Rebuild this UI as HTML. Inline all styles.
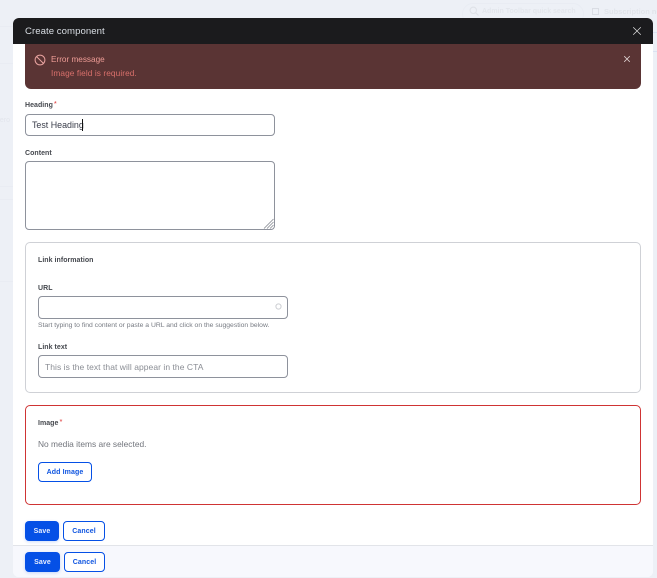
<!DOCTYPE html>
<html><head><meta charset="utf-8">
<style>
*{box-sizing:border-box}
html,body{margin:0;padding:0}
body{width:657px;height:578px;position:relative;overflow:hidden;background:#edf0f6;font-family:"Liberation Sans",Arial,sans-serif}
.a{position:absolute;white-space:nowrap}
.lbl{font-size:7px;line-height:10px;font-weight:700;color:#45484e;letter-spacing:.04px}
.req{color:#d33;font-size:7.5px;position:relative;top:-1px;margin-left:1px;font-weight:400}
.inp{position:absolute;background:#fff;border:1px solid #8e929c;border-radius:4px}
.btn{position:absolute;border-radius:4px;font-size:7px;font-weight:700;text-align:center;letter-spacing:.1px}
.pri{background:#0550e6;color:#e8eeff;box-shadow:0 1px 3px rgba(5,80,230,.2)}
.sec{background:#fff;color:#0f55e0;border:1px solid #0550e6}
</style></head>
<body>
<!-- background -->
<div class="a" style="left:0;top:26px;width:13px;height:1px;background:#e9ecf3"></div>
<div class="a" style="left:0;top:63px;width:13px;height:1px;background:#e9ecf3"></div>
<div class="a" style="left:0;top:186px;width:13px;height:1px;background:#e9ecf3"></div>
<div class="a" style="left:0;top:199px;width:13px;height:1px;background:#e9ecf3"></div>
<div class="a" style="left:0;top:281px;width:13px;height:1px;background:#e9ecf3"></div>
<div class="a" style="left:0;top:116px;font-size:7px;line-height:10px;color:#e2e5ec;width:10px;overflow:hidden;direction:rtl">ero</div>
<div class="a" style="left:653px;top:32px;width:4px;height:1px;background:#dbe2f2"></div>
<div class="a" style="left:653px;top:51px;width:4px;height:1px;background:#dbe2f2"></div>
<div class="a" style="left:462px;top:3px;width:122px;height:22px;border:1px solid #e9ecf3;border-radius:11px"></div>
<svg class="a" style="left:469px;top:6px" width="10" height="10" viewBox="0 0 10 10" fill="none" stroke="#dfe2e8" stroke-width="1.1"><circle cx="4.3" cy="4.3" r="3.2"/><path d="M6.8 6.8L9.5 9.5"/></svg>
<div class="a" style="left:482px;top:6px;font-size:7px;line-height:11px;font-weight:700;color:#e3e6ec">Admin Toolbar quick search</div>
<div class="a" style="left:592px;top:8px;width:7px;height:7px;border:1px solid #dadde4"></div>
<div class="a" style="left:604px;top:6px;font-size:7.5px;line-height:11px;font-weight:700;color:#e1e4ea">Subscription not a</div>

<!-- dialog -->
<div class="a" style="left:13px;top:18px;width:640px;height:559px;background:#fff;border-radius:6px;overflow:hidden">
  <div class="a" style="left:0;top:0;width:640px;height:26px;background:#1b1b1d"></div>
  <div class="a" style="left:0;top:527px;width:640px;height:32px;background:#f7f8fd;border-top:1px solid #e2e4e9"></div>
</div>
<div class="a" style="left:25px;top:26px;font-size:9.6px;line-height:12px;color:#d8dde3;letter-spacing:.05px">Create component</div>
<svg class="a" style="left:632px;top:25px" width="10" height="12" viewBox="0 0 10 12" fill="none" stroke="#e0e0e0" stroke-width=".7"><path d="M1.2 2.2L8.8 9.8M8.8 2.2L1.2 9.8"/></svg>

<!-- error -->
<div class="a" style="left:25px;top:44px;width:616px;height:45px;background:#5a3434;border-radius:0 0 6px 6px"></div>
<svg class="a" style="left:34px;top:54px" width="12" height="12" viewBox="0 0 12 12" fill="none" stroke="#e9a3a0" stroke-width="1"><circle cx="6" cy="6" r="4.9"/><path d="M2.6 2.6L9.4 9.4"/></svg>
<div class="a" style="left:51px;top:54px;font-size:8.2px;line-height:11px;color:#ee9c96">Error message</div>
<div class="a" style="left:51px;top:68px;font-size:8.3px;line-height:11px;color:#d9706b;letter-spacing:.08px">Image field is required.</div>
<svg class="a" style="left:623px;top:55px" width="8" height="8" viewBox="0 0 8 8" fill="none" stroke="#e0d4d4" stroke-width=".75"><path d="M1.2 1.2L6.8 6.8M6.8 1.2L1.2 6.8"/></svg>

<!-- heading -->
<div class="a lbl" style="left:25px;top:100px">Heading<span class="req">*</span></div>
<div class="inp" style="left:25px;top:114px;width:250px;height:22px"></div>
<div class="a" style="left:32px;top:119px;font-size:8.9px;line-height:12px;color:#3a3d4a">Test Heading</div>
<div class="a" style="left:82px;top:119px;width:1px;height:12px;background:#111"></div>

<!-- content -->
<div class="a lbl" style="left:25px;top:149px">Content</div>
<div class="inp" style="left:25px;top:161px;width:250px;height:69px"></div>
<svg class="a" style="left:263px;top:218px" width="11" height="11" viewBox="0 0 11 11" fill="none" stroke="#777b84" stroke-width=".7"><path d="M1 10.5L10.5 1M4 10.5L10.5 4M7 10.5L10.5 7"/></svg>

<!-- link info -->
<div class="a" style="left:25px;top:242px;width:616px;height:151px;border:1px solid #cfd1d6;border-radius:5px"></div>
<div class="a lbl" style="left:38px;top:256px">Link information</div>
<div class="a lbl" style="left:38px;top:284px">URL</div>
<div class="inp" style="left:38px;top:296px;width:250px;height:23px"></div>
<svg class="a" style="left:275px;top:303px" width="7" height="7" viewBox="0 0 7 7" fill="none" stroke="#cdcfd3" stroke-width="1"><circle cx="3.5" cy="3.5" r="2.6"/></svg>
<div class="a" style="left:38px;top:321px;font-size:6.8px;line-height:10px;color:#777b83">Start typing to find content or paste a URL and click on the suggestion below.</div>
<div class="a lbl" style="left:38px;top:343px">Link text</div>
<div class="inp" style="left:38px;top:355px;width:250px;height:23px"></div>
<div class="a" style="left:45px;top:361px;font-size:8.5px;line-height:12px;color:#8a8d94;letter-spacing:.05px">This is the text that will appear in the CTA</div>

<!-- image -->
<div class="a" style="left:25px;top:405px;width:616px;height:100px;border:1px solid #cf3434;border-radius:5px"></div>
<div class="a lbl" style="left:38px;top:418px">Image<span class="req">*</span></div>
<div class="a" style="left:38px;top:438px;font-size:8.4px;line-height:12px;color:#72757c">No media items are selected.</div>
<div class="btn sec" style="left:38px;top:462px;width:54px;height:20px;line-height:20px">Add Image</div>

<!-- buttons -->
<div class="btn pri" style="left:25px;top:521px;width:34px;height:20px;line-height:22px">Save</div>
<div class="btn sec" style="left:63px;top:521px;width:42px;height:20px;line-height:20px">Cancel</div>
<div class="btn pri" style="left:25px;top:552px;width:35px;height:20px;line-height:22px">Save</div>
<div class="btn sec" style="left:64px;top:552px;width:41px;height:20px;line-height:20px">Cancel</div>
</body></html>
